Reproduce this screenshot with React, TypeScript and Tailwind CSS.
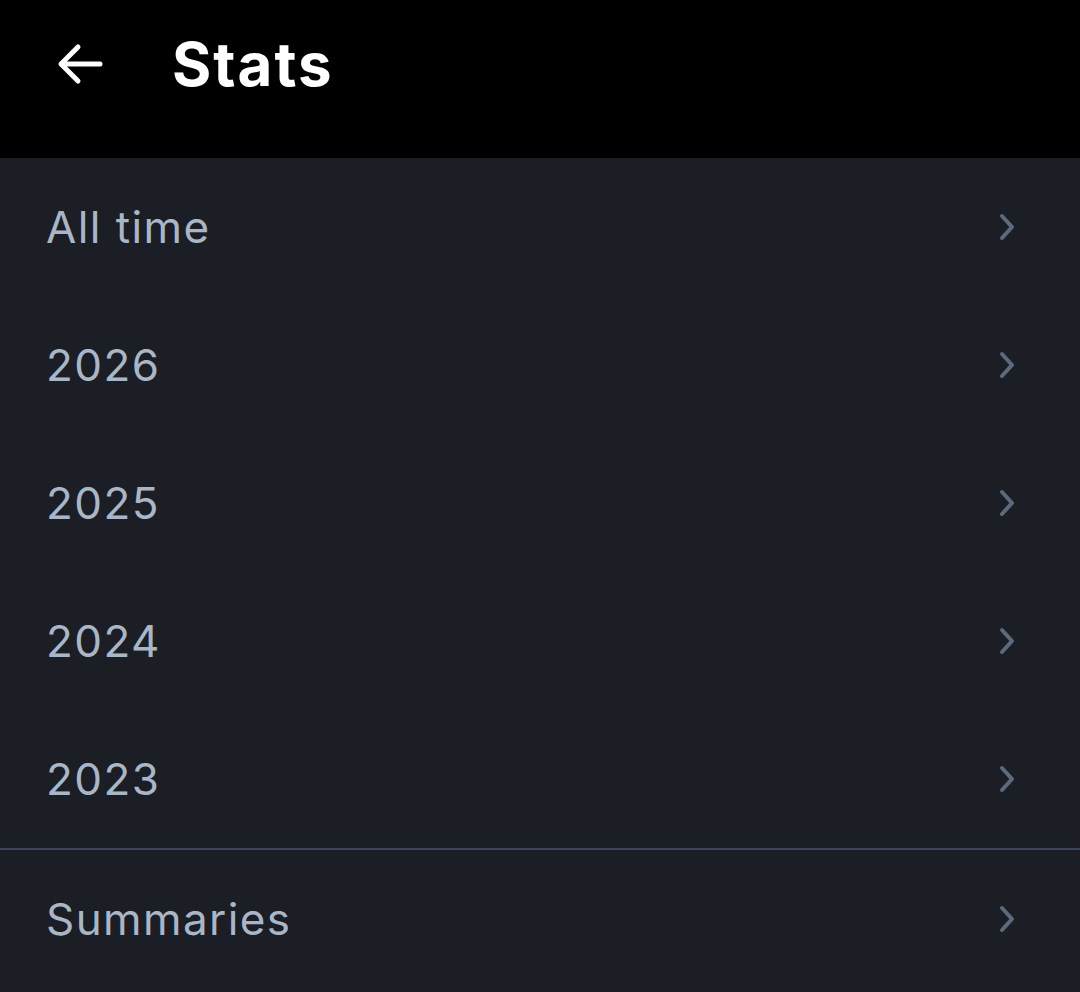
import React from 'react';

const rows = ['All time', '2026', '2025', '2024', '2023'];

const Chevron = () => (
    <svg width="24" height="30" viewBox="0 0 24 30" fill="none" className="mr-[60px]">
        <path d="M6 4 L16 15 L6 26" stroke="#5d6a7b" strokeWidth="4" strokeLinecap="round" strokeLinejoin="round" />
    </svg>
);

const Row = ({ label }: { label: string }) => (
    <div className="flex items-center justify-between h-[138px] pl-[46px]">
        <span className="text-[44px] text-[#a9b6c6] tracking-[1.4px]">{label}</span>
        <Chevron />
    </div>
);

const App = () => {
    return (
        <div className="w-[1080px] h-[992px] bg-[#1b1e24] overflow-hidden" style={{ fontFamily: 'Inter, "Noto Sans", sans-serif' }}>
            <header className="flex items-center h-[158px] bg-black pb-[30px]">
                <button className="ml-[54px] w-[52px] h-[52px] flex items-center justify-center">
                    <svg width="52" height="52" viewBox="0 0 52 52" fill="none">
                        <path d="M46 26 H8 M24 9 L7 26 L24 43" stroke="white" strokeWidth="5" strokeLinecap="round" strokeLinejoin="round" />
                    </svg>
                </button>
                <h1 className="ml-[66px] text-[60px] font-bold text-white leading-none tracking-[2px]">Stats</h1>
            </header>
            <div>
                {rows.map((r) => (
                    <Row key={r} label={r} />
                ))}
            </div>
            <div className="h-[2px] bg-[#3a4758]" />
            <Row label="Summaries" />
        </div>
    );
};

export default App;
